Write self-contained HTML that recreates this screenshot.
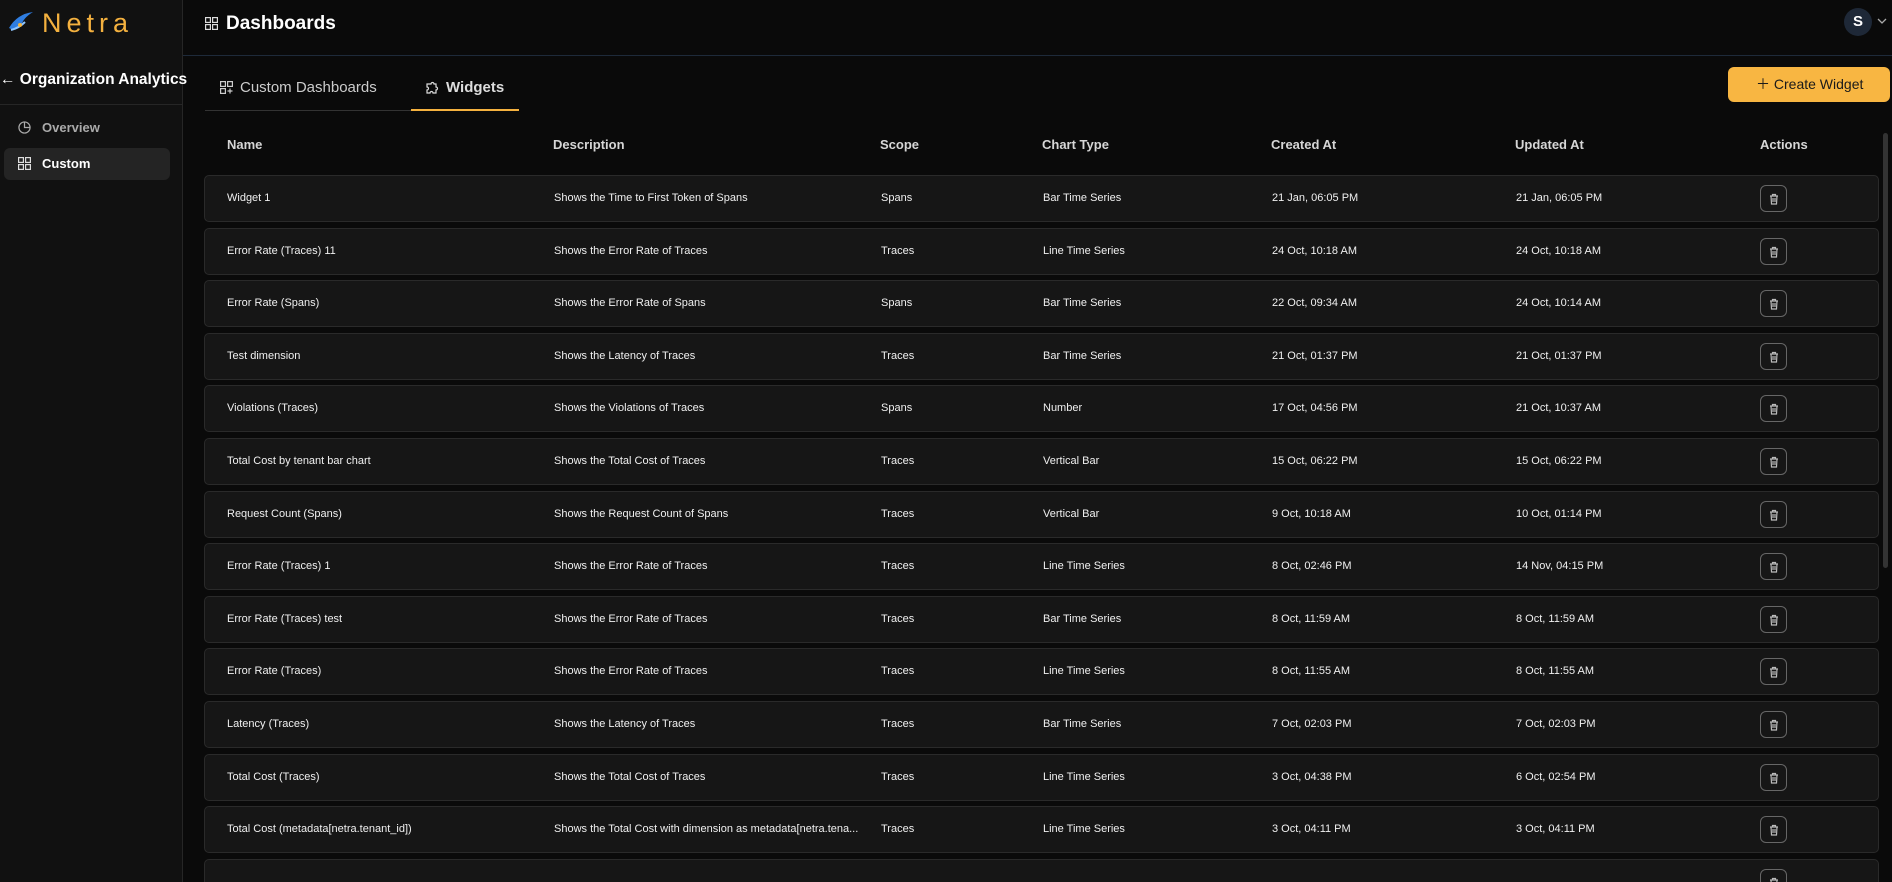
<!DOCTYPE html>
<html><head><meta charset="utf-8"><style>
*{box-sizing:border-box;margin:0;padding:0}
html,body{width:1892px;height:882px;overflow:hidden}
body{background:#0a0a0a;font-family:"Liberation Sans",sans-serif;color:#e8e8e8;position:relative}
.side{position:absolute;left:0;top:0;width:183px;height:882px;background:#111;border-right:1px solid #262626}
.abs{position:absolute}
.hdr{position:absolute;left:183px;top:0;right:0;height:56px;border-bottom:1px solid #1e2a3a}
.row{position:absolute;left:204px;width:1675px;height:47px;background:#161616;border:1px solid #2a2a2a;border-radius:5px;font-size:11px;color:#f0f0f0}
.row span{position:absolute;top:16px;white-space:nowrap}
.th{position:absolute;top:137px;font-size:13px;font-weight:bold;color:#d6d6d6}
.trash{position:absolute;left:1555px;top:9px;width:27px;height:27px;border:1px solid #666;border-radius:6px}
</style></head><body>
<div class="side">
<svg class="abs" style="left:6px;top:10px" width="30" height="24" viewBox="0 0 28 24"><path d="M2 18 Q10 4 26 2 Q16 8 14 16 Q8 22 2 18Z" fill="#2f7de0"/><path d="M4 20 Q12 18 18 12" stroke="#8ec5ff" stroke-width="2" fill="none"/><circle cx="13" cy="15" r="2" fill="#f3b43e"/></svg>
<div class="abs" style="left:42px;top:8px;font-size:27px;color:#f4b13f;letter-spacing:5px">Netra</div>
<div class="abs" style="left:0;top:71px;font-size:15.5px;font-weight:bold;color:#fff;white-space:nowrap"><span style="font-weight:normal">←</span> Organization Analytics</div>
<div class="abs" style="left:0;top:104px;width:183px;height:1px;background:#262626"></div>
<svg class="abs" style="left:18px;top:121px" width="13" height="13" viewBox="0 0 14 14"><circle cx="7" cy="7" r="6" stroke="#aaa" fill="none" stroke-width="1.3"/><path d="M7 1V7H13" stroke="#aaa" fill="none" stroke-width="1.3"/></svg>
<div class="abs" style="left:42px;top:120px;font-size:13px;font-weight:bold;color:#aaa">Overview</div>
<div class="abs" style="left:4px;top:148px;width:166px;height:32px;background:#242424;border-radius:6px"></div>
<svg class="abs" style="left:18px;top:157px" width="13" height="13" viewBox="0 0 13 13" fill="none" stroke="#ddd" stroke-width="1.2"><rect x=".6" y=".6" width="4.8" height="4.8"/><rect x="7.6" y=".6" width="4.8" height="4.8"/><rect x=".6" y="7.6" width="4.8" height="4.8"/><rect x="7.6" y="7.6" width="4.8" height="4.8"/></svg>
<div class="abs" style="left:42px;top:156px;font-size:13px;font-weight:bold;color:#fff">Custom</div>
</div>
<div class="hdr">
<svg class="abs" style="left:22px;top:17px" width="13" height="13" viewBox="0 0 13 13" fill="none" stroke="#ddd" stroke-width="1.2"><rect x=".6" y=".6" width="4.8" height="4.8"/><rect x="7.6" y=".6" width="4.8" height="4.8"/><rect x=".6" y="7.6" width="4.8" height="4.8"/><rect x="7.6" y="7.6" width="4.8" height="4.8"/></svg>
<div class="abs" style="left:43px;top:13px;font-size:19px;font-weight:bold;color:#fff">Dashboards</div>
<div class="abs" style="left:1661px;top:8px;width:28px;height:28px;border-radius:50%;background:#1e2837;color:#fff;font-weight:bold;font-size:15px;text-align:center;line-height:28px">S</div>
<svg class="abs" style="left:1694px;top:18px" width="10" height="7" viewBox="0 0 10 7"><path d="M1 1L5 5L9 1" stroke="#aaa" fill="none" stroke-width="1.3"/></svg>
</div>
<div class="abs" style="left:205px;top:110px;width:314px;height:1px;background:#333"></div>
<div class="abs" style="left:411px;top:109px;width:108px;height:2px;background:#f4b13f"></div>
<svg class="abs" style="left:220px;top:81px" width="13" height="13" viewBox="0 0 13 13" fill="none" stroke="#ccc" stroke-width="1.2"><rect x=".6" y=".6" width="4.8" height="4.8"/><rect x="7.6" y=".6" width="4.8" height="4.8"/><rect x=".6" y="7.6" width="4.8" height="4.8"/><path d="M10 7.5V12.5M7.5 10H12.5"/></svg>
<div class="abs" style="left:240px;top:79px;font-size:15px;color:#ccc">Custom Dashboards</div>
<svg class="abs" style="left:426px;top:81px" width="13" height="13" viewBox="0 0 13 13" fill="none" stroke="#ddd" stroke-width="1.2"><path d="M3 3H5A1.5 1.5 0 0 1 8 3H10V6A1.5 1.5 0 0 1 10 9V12H7A1.5 1.5 0 0 0 4 12H1V9A1.5 1.5 0 0 0 1 6V3Z"/></svg>
<div class="abs" style="left:446px;top:79px;font-size:15px;font-weight:bold;color:#ddd">Widgets</div>
<div class="abs" style="left:1728px;top:67px;width:162px;height:35px;background:#f8b642;border-radius:6px;color:#1a1a1a;font-size:14px;line-height:35px;padding-left:28px">＋ Create Widget</div>
<div class="th" style="left:227px">Name</div><div class="th" style="left:553px">Description</div><div class="th" style="left:880px">Scope</div><div class="th" style="left:1042px">Chart Type</div><div class="th" style="left:1271px">Created At</div><div class="th" style="left:1515px">Updated At</div><div class="th" style="left:1760px">Actions</div>
<div class="abs" style="left:1883px;top:133px;width:5px;height:435px;background:#333;border-radius:3px"></div>
<div id="rows"></div>
<script>
var d=[["Widget 1","Shows the Time to First Token of Spans","Spans","Bar Time Series","21 Jan, 06:05 PM","21 Jan, 06:05 PM"],
["Error Rate (Traces) 11","Shows the Error Rate of Traces","Traces","Line Time Series","24 Oct, 10:18 AM","24 Oct, 10:18 AM"],
["Error Rate (Spans)","Shows the Error Rate of Spans","Spans","Bar Time Series","22 Oct, 09:34 AM","24 Oct, 10:14 AM"],
["Test dimension","Shows the Latency of Traces","Traces","Bar Time Series","21 Oct, 01:37 PM","21 Oct, 01:37 PM"],
["Violations (Traces)","Shows the Violations of Traces","Spans","Number","17 Oct, 04:56 PM","21 Oct, 10:37 AM"],
["Total Cost by tenant bar chart","Shows the Total Cost of Traces","Traces","Vertical Bar","15 Oct, 06:22 PM","15 Oct, 06:22 PM"],
["Request Count (Spans)","Shows the Request Count of Spans","Traces","Vertical Bar","9 Oct, 10:18 AM","10 Oct, 01:14 PM"],
["Error Rate (Traces) 1","Shows the Error Rate of Traces","Traces","Line Time Series","8 Oct, 02:46 PM","14 Nov, 04:15 PM"],
["Error Rate (Traces) test","Shows the Error Rate of Traces","Traces","Bar Time Series","8 Oct, 11:59 AM","8 Oct, 11:59 AM"],
["Error Rate (Traces)","Shows the Error Rate of Traces","Traces","Line Time Series","8 Oct, 11:55 AM","8 Oct, 11:55 AM"],
["Latency (Traces)","Shows the Latency of Traces","Traces","Bar Time Series","7 Oct, 02:03 PM","7 Oct, 02:03 PM"],
["Total Cost (Traces)","Shows the Total Cost of Traces","Traces","Line Time Series","3 Oct, 04:38 PM","6 Oct, 02:54 PM"],
["Total Cost (metadata[netra.tenant_id])","Shows the Total Cost with dimension as metadata[netra.tena...","Traces","Line Time Series","3 Oct, 04:11 PM","3 Oct, 04:11 PM"],
["","","","","",""]];
var x=[22,349,676,838,1067,1311],h="";
var tr='<div class="trash"><svg style="position:absolute;left:8px;top:7px" width="10" height="12" viewBox="0 0 10 12" fill="none" stroke="#bbb" stroke-width="1.2"><path d="M1 3H9M3.5 3V1.5H6.5V3M2 3L2.5 11H7.5L8 3M4 5V9M6 5V9"/></svg></div>';
d.forEach(function(r,i){h+='<div class="row" style="top:'+(175+i*52.6)+'px">';r.forEach(function(c,j){h+='<span style="left:'+x[j]+'px">'+c+'</span>'});h+=tr+'</div>'});
document.getElementById('rows').innerHTML=h;
</script>
</body></html>
